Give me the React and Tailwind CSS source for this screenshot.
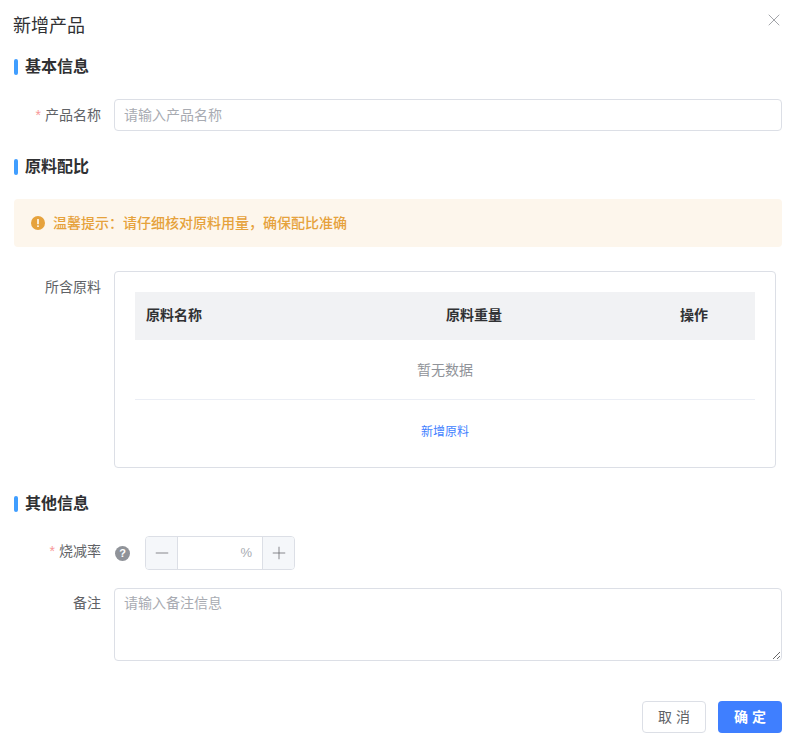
import { useState } from "react";
import { Minus, Plus, X } from "lucide-react";

const FONT = "font-['Liberation_Sans','Noto_Sans_CJK_SC',sans-serif]";

const SectionTitle = ({ children, className = "" }) => (
  <div className={`flex h-[22px] items-center ${className}`}>
    <span className="h-4 w-1 rounded-sm bg-[#409eff]" />
    <h3 className="ml-[7px] text-base leading-[22px] font-bold text-[#303133]">
      {children}
    </h3>
  </div>
);

const FieldLabel = ({ required, children, className = "" }) => (
  <label className={`w-[87px] shrink-0 text-right text-sm leading-8 text-[#606266] ${className}`}>
    {required && <span className="mr-1 text-[#f89898]">*</span>}
    {children}
  </label>
);

const App = () => {
  const [name, setName] = useState("");
  const [note, setNote] = useState("");

  return (
    <div className={`relative h-[745px] w-[796px] overflow-hidden bg-white px-[14px] ${FONT}`}>
      <h2 className="-ml-px pt-[13px] text-lg leading-[26px] text-[#303133]">新增产品</h2>
      <button type="button" aria-label="关闭" className="absolute top-[10px] right-3 text-[#909399]">
        <X size={20} strokeWidth={1} />
      </button>

      <SectionTitle className="mt-[17px]">基本信息</SectionTitle>

      <div className="mt-[21px] flex">
        <FieldLabel required>产品名称</FieldLabel>
        <input
          value={name}
          onChange={(e) => setName(e.target.value)}
          placeholder="请输入产品名称"
          className="ml-[13px] h-8 flex-1 rounded border border-[#dcdfe6] px-[9px] text-sm text-[#606266] outline-none placeholder:text-[#a8abb2]"
        />
      </div>

      <SectionTitle className="mt-[25px]">原料配比</SectionTitle>

      <div className="mt-[21px] flex h-12 items-center rounded bg-[#fdf6ec] pl-[17px] text-sm font-medium text-[#e6a23c]">
        <svg viewBox="0 0 14 14" className="mr-2 h-[14px] w-[14px]">
          <circle cx="7" cy="7" r="7" fill="#e6a23c" />
          <rect x="6.2" y="3" width="1.6" height="5.2" rx="0.5" fill="#fff" />
          <rect x="6.2" y="9.2" width="1.6" height="1.7" rx="0.5" fill="#fff" />
        </svg>
        温馨提示：请仔细核对原料用量，确保配比准确
      </div>

      <div className="mt-6 flex">
        <FieldLabel>所含原料</FieldLabel>
        <div className="ml-[13px] h-[197px] w-[662px] rounded border border-[#dcdfe6] px-5 pt-5">
          <div className="grid h-12 grid-cols-[300px_234px_86px] items-center bg-[#f1f2f4] pb-0.5 pl-[11px] text-sm font-bold text-[#303133]">
            <span>原料名称</span>
            <span>原料重量</span>
            <span>操作</span>
          </div>
          <div className="flex h-[60px] items-center justify-center border-b border-[#ebeef5] text-sm text-[#909399]">
            暂无数据
          </div>
          <div className="flex h-[63px] items-center justify-center">
            <button type="button" className="text-xs text-[#3f7fff]">新增原料</button>
          </div>
        </div>
      </div>

      <SectionTitle className="mt-[25px]">其他信息</SectionTitle>

      <div className="mt-[21px] flex">
        <FieldLabel required className="-mt-px">烧减率</FieldLabel>
        <div className="mt-[10px] ml-[14px] flex h-[15px] w-[15px] items-center justify-center rounded-full bg-[#909399] text-[11px] leading-none font-bold text-white">
          ?
        </div>
        <div className="ml-[15px] flex h-[34px] w-[150px] overflow-hidden rounded border border-[#dcdfe6]">
          <button type="button" aria-label="减少" className="flex w-8 items-center justify-center border-r border-[#dcdfe6] bg-[#f5f7fa] text-[#606266]">
            <Minus size={20} strokeWidth={0.9} />
          </button>
          <div className="flex flex-1 items-center justify-end pr-[10px] text-[13px] text-[#a8abb2]">%</div>
          <button type="button" aria-label="增加" className="flex w-8 items-center justify-center border-l border-[#dcdfe6] bg-[#f5f7fa] text-[#606266]">
            <Plus size={20} strokeWidth={0.9} />
          </button>
        </div>
      </div>

      <div className="mt-[18px] flex">
        <FieldLabel className="-mt-px">备注</FieldLabel>
        <textarea
          value={note}
          onChange={(e) => setNote(e.target.value)}
          placeholder="请输入备注信息"
          className="ml-[13px] h-[73px] flex-1 rounded border border-[#dcdfe6] px-[9px] py-1 text-sm leading-[20px] text-[#606266] outline-none placeholder:text-[#a8abb2]"
        />
      </div>

      <div className="mt-10 flex justify-end gap-3">
        <button type="button" className="h-8 w-16 rounded border border-[#dcdfe6] bg-white text-sm text-[#606266]">
          取 消
        </button>
        <button type="button" className="h-8 w-16 rounded bg-[#3f7fff] text-sm font-bold text-white">
          确 定
        </button>
      </div>
    </div>
  );
};

export default App;
